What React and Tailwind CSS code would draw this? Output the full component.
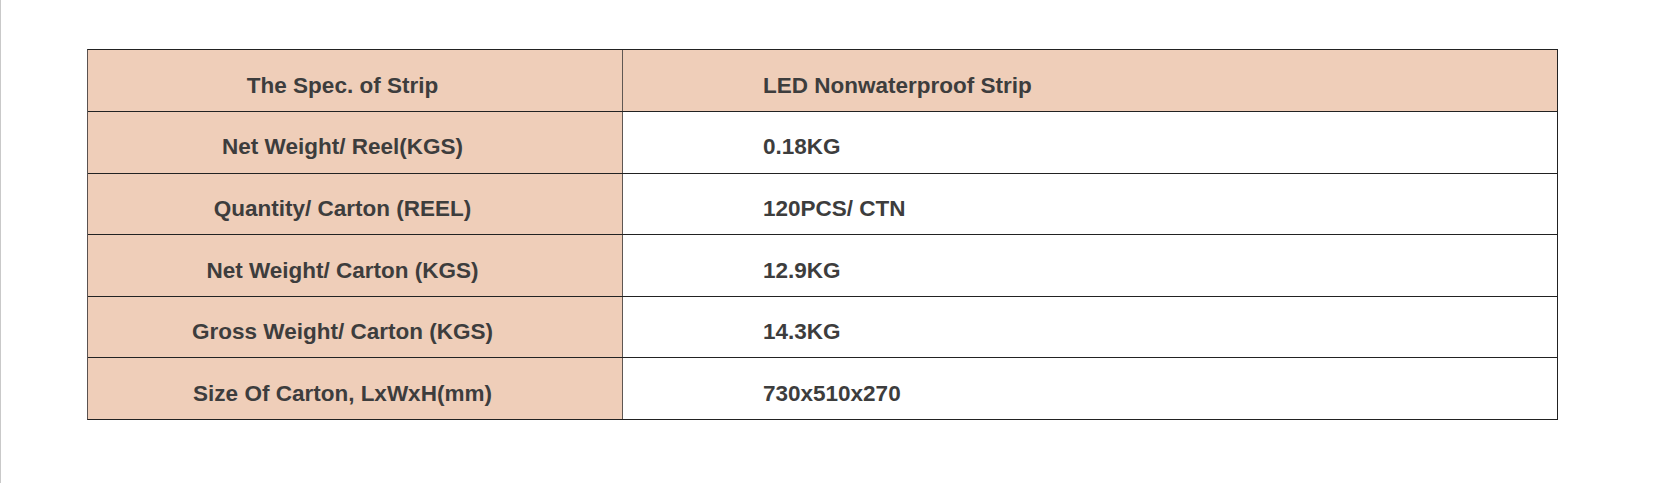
import React from "react";

export default function App() {
    const rows = [
        { label: 'The Spec. of Strip', value: 'LED Nonwaterproof Strip', head: true },
        { label: 'Net Weight/ Reel(KGS)', value: '0.18KG' },
        { label: 'Quantity/ Carton (REEL)', value: '120PCS/ CTN' },
        { label: 'Net Weight/ Carton (KGS)', value: '12.9KG' },
        { label: 'Gross Weight/ Carton (KGS)', value: '14.3KG' },
        { label: 'Size Of Carton, LxWxH(mm)', value: '730x510x270' }
    ]
    return (
        <div
            className="w-[1653px] h-[483px] bg-white border-l border-[#c9c9c9] pl-[86px] pt-[49px]"
            style={{ fontFamily: '"Liberation Sans", Arial, sans-serif' }}
        >
            <div className="w-[1471px] border border-[#222] border-l-[#5a5250]">
                {
                    rows.map((item, index) => (
                        <div
                            key={index}
                            className={"flex " + (index > 0 ? "h-[61.6px] border-t border-[#222]" : "h-[61px]")}
                        >
                            <div className="w-[535px] shrink-0 flex items-center justify-center pt-[10px] pr-[25px] bg-[#efceb9] border-r border-[#5f5752] text-[22.5px] font-bold text-[#3d3d3d]">
                                {item.label}
                            </div>
                            <div
                                className={"flex-1 flex items-center pl-[140px] pt-[10px] text-[22.5px] font-bold text-[#3d3d3d] " + (item.head ? "bg-[#efceb9]" : "bg-white")}
                            >
                                {item.value}
                            </div>
                        </div>
                    ))
                }
            </div>
        </div>
    );
}
